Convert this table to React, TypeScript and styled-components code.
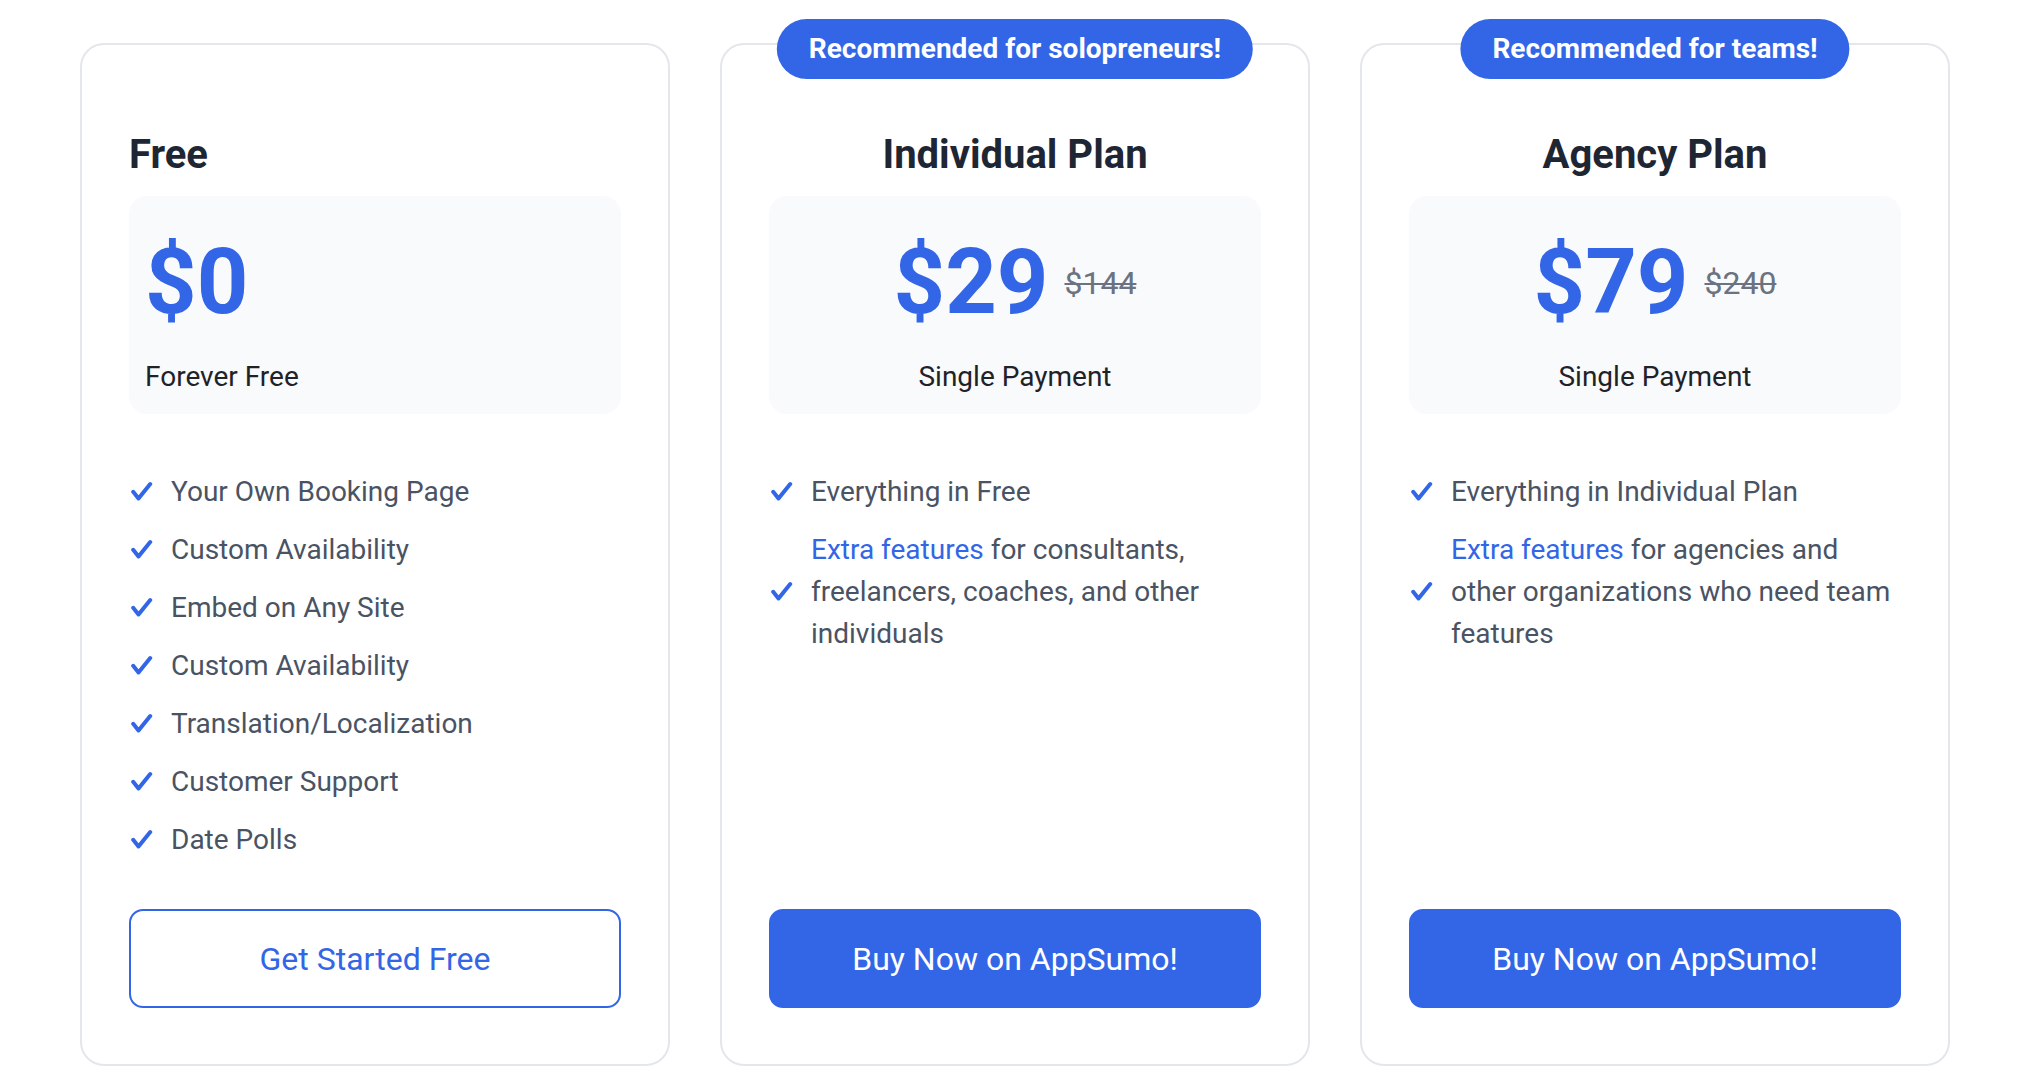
import React from "react";
import styled, { createGlobalStyle, css } from "styled-components";

const GlobalStyle = createGlobalStyle`
  html, body {
    margin: 0;
    padding: 0;
    background: #ffffff;
  }
  body {
    font-family: Roboto, "Liberation Sans", Arial, sans-serif;
    -webkit-font-smoothing: antialiased;
  }
  * { box-sizing: border-box; }
`;

const BLUE = "#3366e6";

const Page = styled.main`
  display: grid;
  grid-template-columns: repeat(3, 590px);
  column-gap: 50px;
  padding: 43px 0 22px 80px;
`;

const Card = styled.section`
  position: relative;
  display: flex;
  flex-direction: column;
  border: 2px solid #e3e6eb;
  border-radius: 24px;
  padding: 86px 47px 56px;
  background: #ffffff;
`;

const Badge = styled.div`
  position: absolute;
  top: -26px;
  left: 50%;
  transform: translateX(-50%);
  height: 60px;
  padding: 0 32px;
  border-radius: 30px;
  background: ${BLUE};
  color: #ffffff;
  font-weight: 700;
  font-size: 28px;
  line-height: 60px;
  white-space: nowrap;
`;

const Title = styled.h2<{ $center?: boolean }>`
  margin: 0;
  font-size: 40px;
  line-height: 48px;
  font-weight: 700;
  color: #1f2633;
  text-align: ${(p) => (p.$center ? "center" : "left")};
`;

const PriceBox = styled.div<{ $center?: boolean }>`
  margin-top: 17px;
  height: 218px;
  padding: 33px 16px 16px;
  border-radius: 18px;
  background: #f9fafc;
  display: flex;
  flex-direction: column;
  align-items: ${(p) => (p.$center ? "center" : "flex-start")};
`;

const PriceRow = styled.div`
  display: flex;
  align-items: center;
  gap: 16px;
  height: 108px;
`;

const Price = styled.span`
  font-size: 90px;
  line-height: 108px;
  font-weight: 700;
  color: ${BLUE};
`;

const OldPrice = styled.s`
  font-size: 32px;
  line-height: 40px;
  font-weight: 400;
  color: #6b7280;
  text-decoration-thickness: 2px;
`;

const PriceNote = styled.div`
  margin-top: 19px;
  font-size: 28px;
  line-height: 42px;
  color: #1f2328;
`;

const Features = styled.ul`
  list-style: none;
  margin: 57px 0 0;
  padding: 0;
  display: flex;
  flex-direction: column;
  gap: 16px;
  flex: 1;
`;

const Feature = styled.li`
  display: flex;
  align-items: center;
  gap: 18px;
`;

const FeatureText = styled.p`
  flex: 1;
  margin: 0;
  font-size: 28px;
  line-height: 42px;
  color: #4a5363;
`;

const Highlight = styled.em`
  font-style: normal;
  color: ${BLUE};
`;

const CheckIcon = styled.svg`
  flex: none;
  width: 24px;
  height: 24px;
`;

const buttonBase = css`
  display: flex;
  align-items: center;
  justify-content: center;
  width: 100%;
  height: 99px;
  margin-top: 48px;
  border-radius: 14px;
  border: 2px solid ${BLUE};
  font-family: Roboto, "Liberation Sans", Arial, sans-serif;
  font-size: 32px;
  font-weight: 400;
  cursor: pointer;
`;

const ActionButton = styled.button<{ $variant: "outline" | "solid" }>`
  ${buttonBase};
  ${(p) =>
    p.$variant === "outline"
      ? css`
          background: #ffffff;
          color: ${BLUE};
        `
      : css`
          background: ${BLUE};
          color: #ffffff;
        `}
`;

const Check = () => (
  <CheckIcon viewBox="0 0 24 24" aria-hidden="true">
    <path
      d="M4.2 11.8 L9.5 18.4 L21.2 4"
      fill="none"
      stroke={BLUE}
      strokeWidth="4"
      strokeLinecap="round"
      strokeLinejoin="round"
    />
  </CheckIcon>
);

type Plan = {
  badge?: string;
  title: string;
  price: string;
  oldPrice?: string;
  note: string;
  features: React.ReactNode[];
  cta: string;
  variant: "outline" | "solid";
  center: boolean;
};

const plans: Plan[] = [
  {
    title: "Free",
    price: "$0",
    note: "Forever Free",
    features: [
      "Your Own Booking Page",
      "Custom Availability",
      "Embed on Any Site",
      "Custom Availability",
      "Translation/Localization",
      "Customer Support",
      "Date Polls",
    ],
    cta: "Get Started Free",
    variant: "outline",
    center: false,
  },
  {
    badge: "Recommended for solopreneurs!",
    title: "Individual Plan",
    price: "$29",
    oldPrice: "$144",
    note: "Single Payment",
    features: [
      "Everything in Free",
      <>
        <Highlight>Extra features</Highlight> for consultants, freelancers,
        coaches, and other individuals
      </>,
    ],
    cta: "Buy Now on AppSumo!",
    variant: "solid",
    center: true,
  },
  {
    badge: "Recommended for teams!",
    title: "Agency Plan",
    price: "$79",
    oldPrice: "$240",
    note: "Single Payment",
    features: [
      "Everything in Individual Plan",
      <>
        <Highlight>Extra features</Highlight> for agencies and other
        organizations who need team features
      </>,
    ],
    cta: "Buy Now on AppSumo!",
    variant: "solid",
    center: true,
  },
];

export default function App() {
  return (
    <>
      <GlobalStyle />
      <Page>
        {plans.map((plan) => (
          <Card key={plan.title}>
            {plan.badge && <Badge>{plan.badge}</Badge>}
            <Title $center={plan.center}>{plan.title}</Title>
            <PriceBox $center={plan.center}>
              <PriceRow>
                <Price>{plan.price}</Price>
                {plan.oldPrice && <OldPrice>{plan.oldPrice}</OldPrice>}
              </PriceRow>
              <PriceNote>{plan.note}</PriceNote>
            </PriceBox>
            <Features>
              {plan.features.map((f, i) => (
                <Feature key={i}>
                  <Check />
                  <FeatureText>{f}</FeatureText>
                </Feature>
              ))}
            </Features>
            <ActionButton $variant={plan.variant}>{plan.cta}</ActionButton>
          </Card>
        ))}
      </Page>
    </>
  );
}
